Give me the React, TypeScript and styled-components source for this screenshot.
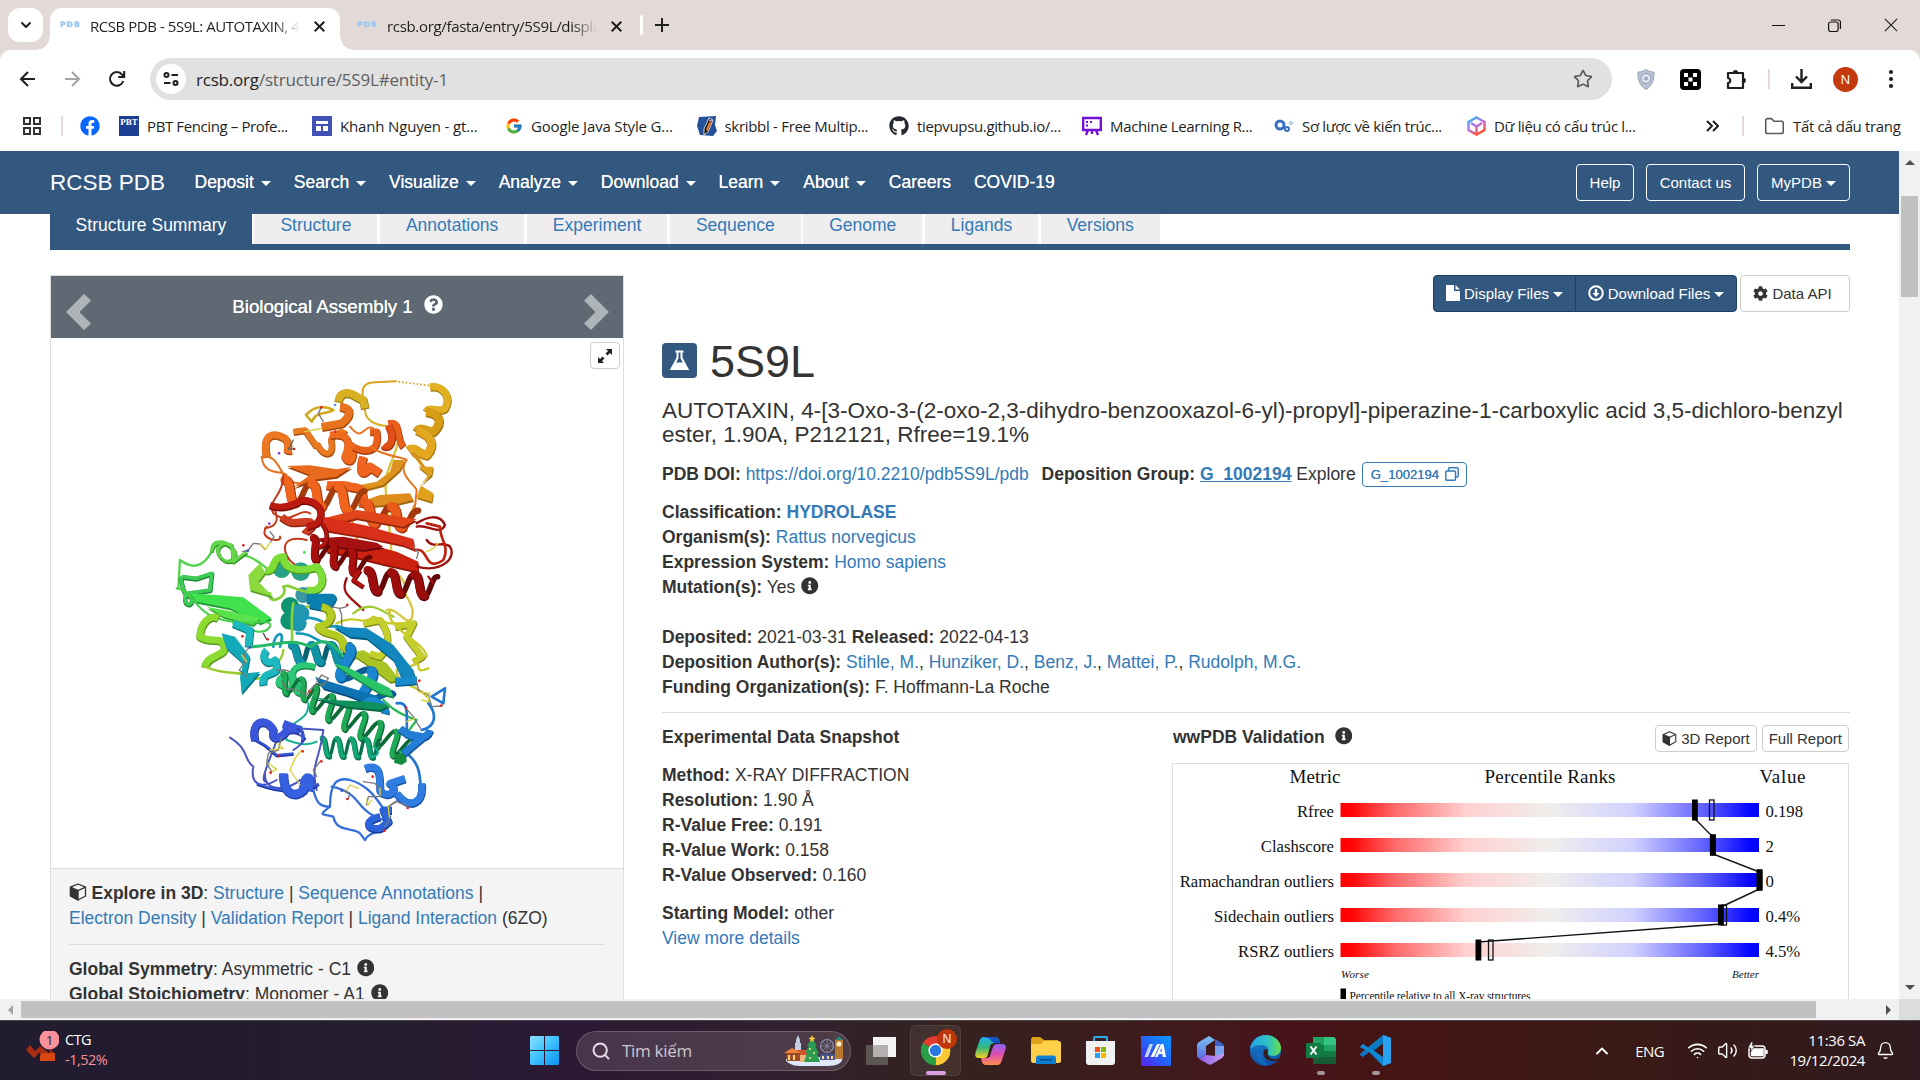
import React from 'react';
import styled, { createGlobalStyle, css } from 'styled-components';
import { FaFacebook, FaGithub, FaInfoCircle, FaQuestionCircle, FaCog } from 'react-icons/fa';
import { FcGoogle } from 'react-icons/fc';
import { Bell, Search, Wifi, Volume2, Star, ChevronUp, ChevronDown, Folder } from 'lucide-react';

const blue = '#325880';
const link = '#337ab7';
const ui = '"Open Sans", "Noto Sans", sans-serif';
const arial = '"Liberation Sans", Arial, sans-serif';

const Global = createGlobalStyle`
  * { box-sizing: border-box; }
  body { margin: 0; background: #fff; overflow: hidden; }
  svg { display: block; flex: none; }
`;

const Screen = styled.div`
  width: 1920px;
  height: 1080px;
  display: flex;
  flex-direction: column;
  overflow: hidden;
  font-family: ${arial};
  color: #333;
`;

/* ---------- browser chrome ---------- */

const TabStrip = styled.div`
  height: 50px;
  flex: none;
  background: #e3dad7;
  display: flex;
  align-items: flex-end;
  padding-left: 8px;
  font: 15px ${ui};
  color: #1f1f1f;
`;
const TabMenu = styled.div`
  width: 35px;
  height: 34px;
  margin-bottom: 8px;
  border-radius: 12px;
  background: #fff;
  display: flex;
  align-items: center;
  justify-content: center;
`;
const Tab = styled.div<{ $active?: boolean; $w: number }>`
  width: ${p => p.$w}px;
  height: 42px;
  margin-left: 7px;
  padding: 0 15px 6px 10px;
  display: flex;
  align-items: center;
  position: relative;
  ${p => p.$active && css`
    background: #fff;
    border-radius: 12px 12px 0 0;
    &::before, &::after {
      content: '';
      position: absolute;
      bottom: 0;
      width: 14px;
      height: 14px;
    }
    &::before { left: -14px; background: radial-gradient(circle at 0 0, transparent 13.5px, #fff 14px); }
    &::after { right: -14px; background: radial-gradient(circle at 100% 0, transparent 13.5px, #fff 14px); }
  `}
`;
const Favicon = styled.span`
  width: 20px;
  flex: none;
  margin-top: -3px;
  font: 700 7.5px "DejaVu Sans", sans-serif;
  color: #9cc8f2;
  letter-spacing: 1.1px;
  text-shadow: 0 0 0.8px #9cc8f2;
`;
const TabTitle = styled.span<{ $ls: number }>`
  flex: 1;
  margin: 0 14px 0 10px;
  overflow: hidden;
  white-space: nowrap;
  letter-spacing: ${p => p.$ls}px;
  mask-image: linear-gradient(90deg, #000 88%, transparent);
`;
const StripDivider = styled.div`
  width: 3px;
  height: 20px;
  margin: 0 12px 15px 3px;
  border-radius: 2px;
  background: #fff;
`;
const PlusBox = styled.div`
  padding-bottom: 18px;
`;
const WindowButtons = styled.div`
  flex: 1;
  height: 50px;
  display: flex;
  justify-content: flex-end;
  align-items: center;
  gap: 43px;
  padding-right: 22px;
`;

const Toolbar = styled.div`
  height: 58px;
  flex: none;
  background: #e3dad7;
`;
const ToolbarFace = styled.div`
  height: 58px;
  padding: 0 0 0 19px;
  background: #fff;
  border-radius: 11px 11px 0 0;
  display: flex;
  align-items: center;
`;
const NavIcons = styled.div`
  display: flex;
  gap: 26.5px;
  width: 131px;
`;
const AddressBar = styled.div`
  width: 1462px;
  height: 42px;
  border-radius: 21px;
  background: #e1e1e1;
  display: flex;
  align-items: center;
  padding: 0 19px 0 6px;
  font: 17px ${ui};
  letter-spacing: -0.2px;
  color: #5f5f5f;
  b { font-weight: 400; color: #1f1f1f; }
`;
const SiteInfo = styled.div`
  width: 30px;
  height: 30px;
  border-radius: 50%;
  background: #fff;
  margin-right: 10px;
  display: flex;
  align-items: center;
  justify-content: center;
`;
const Grow = styled.div`
  flex: 1;
`;
const Extensions = styled.div`
  display: flex;
  align-items: center;
  gap: 25px;
  padding-left: 25px;
`;
const ToolbarRight = styled.div`
  display: flex;
  align-items: center;
  gap: 21px;
  padding-left: 21px;
`;
const VRule = styled.div<{ $m?: string }>`
  width: 2px;
  height: 20px;
  background: #e3dad7;
  margin: ${p => p.$m || '0'};
`;
const Avatar = styled.div`
  width: 25px;
  height: 25px;
  border-radius: 50%;
  background: #c5390f;
  color: #fff;
  font: 13px/25px ${ui};
  text-align: center;
`;
const Bookmarks = styled.div`
  height: 43px;
  flex: none;
  display: flex;
  align-items: center;
  padding: 0 18px 7px 23px;
  background: #fff;
  font: 15px/20px ${ui};
  color: #1f1f1f;
`;
const Bookmark = styled.div<{ $w: number; $ls: number }>`
  width: ${p => p.$w}px;
  display: flex;
  align-items: center;
  gap: 8px;
  white-space: nowrap;
  letter-spacing: ${p => p.$ls}px;
`;
const BlueTile = styled.span`
  width: 20px;
  height: 20px;
  background: #1c3f94;
  color: #fff;
  font: 700 9px/12px "Liberation Serif", serif;
  text-align: center;
  letter-spacing: 0;
`;

/* ---------- page ---------- */

const Middle = styled.div`
  height: 848px;
  flex: none;
  display: flex;
`;
const Page = styled.div`
  width: 1899px;
  height: 848px;
  overflow: hidden;
  background: #fff;
  font-size: 17.5px;
  line-height: 25px;
`;
const SiteNav = styled.div`
  height: 63px;
  background: ${blue};
  color: #fff;
  display: flex;
  align-items: center;
  padding: 0 49px 0 50px;
`;
const Brand = styled.div`
  width: 144.5px;
  font-size: 22.5px;
  white-space: nowrap;
  padding-bottom: 1px;
`;
const NavItem = styled.div`
  display: flex;
  align-items: center;
  margin-right: 22.9px;
  text-shadow: 0 0 0.4px #fff;
`;
const Caret = styled.i`
  display: inline-block;
  margin-left: 7px;
  margin-top: 2px;
  border: 5px solid transparent;
  border-top-color: currentColor;
  border-bottom: 0;
`;
const OutlineButton = styled.div<{ $w: number }>`
  width: ${p => p.$w}px;
  height: 37px;
  margin-left: 12px;
  padding-bottom: 1px;
  border: 1.25px solid #fff;
  border-radius: 4px;
  font-size: 15px;
  display: flex;
  align-items: center;
  justify-content: center;
  ${Caret} { margin-left: 4px; }
`;
const PageTabs = styled.div`
  margin: 0 49px 0 50px;
  height: 36px;
  border-bottom: 6px solid ${blue};
  display: flex;
  gap: 2.5px;
`;
const PageTab = styled.div<{ $active?: boolean }>`
  padding: 0 ${p => (p.$active ? 25.6 : 26)}px;
  line-height: 22px;
  background: ${p => (p.$active ? blue : '#efeded')};
  color: ${p => (p.$active ? '#fff' : link)};
`;
const Columns = styled.div`
  display: grid;
  grid-template-columns: 574px 1188px;
  column-gap: 38px;
  padding: 25px 0 0 50px;
`;
const Panel = styled.div`
  border: 1px solid #ddd;
  height: 740px;
`;
const PanelHead = styled.div`
  height: 62px;
  background: #5f6973;
  color: #fff;
  display: flex;
  align-items: center;
  justify-content: space-between;
  padding: 9px 14px 0 15px;
`;
const PanelTitle = styled.div`
  display: flex;
  align-items: center;
  gap: 11px;
  padding-bottom: 11px;
  font-size: 18.75px;
  letter-spacing: -0.05px;
  text-shadow: 0 0 0.6px #fff;
  svg { margin-bottom: 3px; }
`;
const Viewer = styled.div`
  height: 530px;
  padding: 22px 0 0 99px;
  position: relative;
`;
const ExpandButton = styled.div`
  position: absolute;
  top: 4px;
  right: 3px;
  width: 30px;
  height: 27px;
  border: 1px solid #ccc;
  border-radius: 4px;
  display: flex;
  align-items: center;
  justify-content: center;
  background: #fff;
`;
const PanelFoot = styled.div`
  border-top: 1px solid #ddd;
  background: #f4f4f4;
  padding: 12px 18px 0 18px;
  height: 146px;
`;
const Line = styled.div`
  height: 25px;
  white-space: pre;
`;
const A = styled.a<{ $b?: boolean; $u?: boolean }>`
  color: ${link};
  font-weight: ${p => (p.$b ? 700 : 400)};
  text-decoration: ${p => (p.$u ? 'underline' : 'none')};
`;
const Rule = styled.hr`
  border: 0;
  border-top: 1px solid #ddd;
  margin: 12.5px 0 12.3px;
`;
const IconSlot = styled.span<{ $m?: string }>`
  display: inline-flex;
  vertical-align: -2px;
  margin: ${p => p.$m || '0'};
`;
const Actions = styled.div`
  display: flex;
  justify-content: flex-end;
  font-size: 15px;
`;
const Action = styled.div<{ $w: number; $light?: boolean; $first?: boolean }>`
  width: ${p => p.$w}px;
  height: 37px;
  border: 1px solid ${p => (p.$light ? '#ccc' : '#1d3f62')};
  background: ${p => (p.$light ? '#fff' : blue)};
  color: ${p => (p.$light ? '#333' : '#fff')};
  border-radius: ${p => (p.$light ? '4px' : p.$first ? '4px 0 0 4px' : '0 4px 4px 0')};
  margin-left: ${p => (p.$light ? 3 : p.$first ? 0 : -1)}px;
  padding-bottom: 1px;
  display: flex;
  align-items: center;
  justify-content: center;
  gap: 4px;
  ${p => p.$light && css`padding-right: 5px;`}
  ${Caret} { margin-left: 0; }
`;
const Heading = styled.div`
  display: flex;
  align-items: center;
  gap: 13px;
  height: 50px;
  margin-top: 24.500px;
  font-size: 45px;
  line-height: 49.5px;
`;
const FlaskTile = styled.div`
  width: 35px;
  height: 35px;
  margin-bottom: 3px;
  border-radius: 4px;
  background: ${blue};
  display: flex;
  align-items: center;
  justify-content: center;
`;
const Title = styled.div`
  margin-top: 12px;
  height: 63.5px;
  font-size: 22.5px;
  line-height: 24.75px;
`;
const Block = styled.div<{ $h: number }>`
  height: ${p => p.$h}px;
`;
const GroupButton = styled.span`
  height: 25px;
  margin-left: 6px;
  padding: 0 7px 0 8px;
  border: 1px solid ${link};
  border-radius: 4px;
  color: ${link};
  font-size: 13.1px;
  text-shadow: 0 0 0.6px ${link};
  display: inline-flex;
  align-items: center;
  gap: 6px;
  vertical-align: middle;
  margin-top: -2px;
`;
const Split = styled.div`
  display: grid;
  grid-template-columns: 510px 677px;
`;
const ValidationHead = styled.div`
  display: flex;
  height: 38px;
  font-weight: 700;
`;
const ValidationTitle = styled.span`
  padding-left: 1px;
`;
const SmallButton = styled.div`
  height: 27px;
  margin-left: 5px;
  padding: 0 6px;
  border: 1px solid #ccc;
  border-radius: 4px;
  font-size: 15px;
  font-weight: 400;
  display: flex;
  align-items: center;
  gap: 4px;
`;
const ChartBox = styled.div`
  border: 1px solid #ddd;
  height: 250px;
`;
const VScroll = styled.div`
  width: 21px;
  background: #f1f1f1;
  display: flex;
  flex-direction: column;
  align-items: center;
  justify-content: space-between;
  padding: 9px 0 9px;
`;
const VThumb = styled.div`
  width: 17px;
  height: 101px;
  margin-top: 31px;
  margin-bottom: auto;
  background: #c1c1c1;
`;
const HScroll = styled.div`
  height: 21px;
  flex: none;
  background: linear-gradient(90deg, #f1f1f1 1899px, #dcdcdc 1899px);
  display: flex;
  align-items: center;
  padding-left: 8px;
`;
const HThumb = styled.div`
  width: 1795px;
  height: 17px;
  margin: 0 70px 0 8px;
  background: #c1c1c1;
`;
const Arrow = styled.i<{ $d: 'u' | 'd' | 'l' | 'r' }>`
  width: 0;
  height: 0;
  border: 5px solid transparent;
  ${p => p.$d === 'u' && css`border-bottom-color: #505050; border-top: 0;`}
  ${p => p.$d === 'd' && css`border-top-color: #505050; border-bottom: 0;`}
  ${p => p.$d === 'l' && css`border-right-color: #a3a3a3; border-left: 0;`}
  ${p => p.$d === 'r' && css`border-left-color: #505050; border-right: 0;`}
`;

/* ---------- taskbar ---------- */

const Taskbar = styled.div`
  height: 60px;
  flex: none;
  display: flex;
  align-items: center;
  border-top: 1px solid #4a444c;
  padding: 0 25px 0 26px;
  background: linear-gradient(90deg, #221c30 0, #241c31 400px, #2d1833 590px, #33202e 800px, #35221f 950px, #3d1c1e 1130px, #47141a 1290px, #431613 1440px, #381a17 1650px, #2f1b1f 1920px);
  color: #fff;
  font: 15px/20px ${ui};
`;
const Stock = styled.div`
  width: 504px;
  display: flex;
  gap: 6px;
`;
const StockText = styled.div`
  letter-spacing: -0.5px;
  line-height: 20px;
  margin-top: -1px;
  font-size: 14.5px;
  span { display: block; color: #f98f9b; }
`;
const SearchPill = styled.div`
  width: 275px;
  height: 40px;
  margin: 0 2px 0 17px;
  border: 1px solid rgba(255, 255, 255, 0.18);
  border-radius: 20px;
  background: rgba(255, 255, 255, 0.13);
  display: flex;
  align-items: center;
  padding: 0 6px 0 14px;
  font-size: 17px;
  letter-spacing: -0.3px;
  color: #cfc6cf;
`;
const Cell = styled.div<{ $active?: boolean }>`
  width: 51px;
  height: 51px;
  margin: 0 2px;
  border-radius: 6px;
  display: flex;
  align-items: center;
  justify-content: center;
  position: relative;
  ${p => p.$active && css`
    background: rgba(255, 255, 255, 0.07);
    border: 1px solid rgba(255, 255, 255, 0.08);
  `}
`;
const RunMark = styled.i<{ $on?: boolean }>`
  position: absolute;
  bottom: ${p => (p.$on ? 0 : 1)}px;
  width: ${p => (p.$on ? 20 : 8)}px;
  height: 4px;
  border-radius: 2px;
  background: ${p => (p.$on ? '#d9a0e4' : '#a39698')};
`;
const CellBadge = styled.span`
  position: absolute;
  left: 26px;
  top: 3px;
  width: 20px;
  height: 20px;
  border-radius: 50%;
  background: #bf360c;
  color: #f0d5cc;
  font: 600 12px/20px ${ui};
  text-align: center;
`;
const Tray = styled.div`
  flex: 1;
  display: flex;
  align-items: center;
  justify-content: flex-end;
`;
const Lang = styled.span`
  margin: 0 23px 0 23px;
  font-size: 15px;
  letter-spacing: -0.6px;
`;
const Clock = styled.div`
  width: 96px;
  text-align: right;
  letter-spacing: -0.4px;
  margin-right: 11px;
  padding-bottom: 1px;
`;

/* ---------- drawings ---------- */

const CubeIcon = ({ s = 18 }: { s?: number }) => (
  <svg width={s} height={s} viewBox="0 0 18 18" fill="none" stroke="#333" strokeWidth="1.3" strokeLinejoin="round">
    <path d="M9 1 16.5 4.2V13L9 17 1.500 13V4.200Z" />
    <path d="M1.500 4.200 9 7.600V17L1.500 13Z" fill="#333" />
    <path d="M9 7.600 16.500 4.200" />
  </svg>
);

const Chevron = ({ flip }: { flip?: boolean }) => (
  <svg width="25" height="36" viewBox="0 0 25 36" fill="#afb4b9">
    <path d={flip ? 'M7 0 25 18 7 36 0 29.500 11.500 18 0 6.500Z' : 'M18 0 25 6.500 13.500 18 25 29.500 18 36 0 18Z'} />
  </svg>
);

type P = [number, number];

function helixPaths(a: P, b: P, amp: number, turns: number) {
  const dx = b[0] - a[0];
  const dy = b[1] - a[1];
  const len = Math.hypot(dx, dy);
  const ux = dx / len;
  const uy = dy / len;
  const at = (t: number, side: number): P => [
    a[0] + dx * t - uy * amp * side,
    a[1] + dy * t + ux * amp * side,
  ];
  const front: string[] = [];
  const back: string[] = [];
  for (let i = 0; i < turns * 2; i++) {
    const side = i % 2 ? 1 : -1;
    const p = at(i / (turns * 2), side);
    const q = at((i + 1) / (turns * 2), -side);
    const k = (len / turns) * 0.28;
    const d = `M${p[0]} ${p[1]}C${p[0] + ux * k} ${p[1] + uy * k} ${q[0] - ux * k} ${q[1] - uy * k} ${q[0]} ${q[1]}`;
    (i % 2 ? back : front).push(d);
  }
  return { front: front.join(''), back: back.join('') };
}

const Helix = ({ a, b, amp, turns, c, d, w = 26 }: { a: P; b: P; amp: number; turns: number; c: string; d: string; w?: number }) => {
  const h = helixPaths(a, b, amp, turns);
  return (
    <g fill="none" strokeLinecap="round">
      <path d={h.back} stroke={d} strokeWidth={w * 0.6} />
      <path d={h.front} stroke={d} strokeWidth={w} transform="translate(2 3)" />
      <path d={h.front} stroke={c} strokeWidth={w - 4} />
    </g>
  );
};

const Ribbon = ({ p, c, d, w = 20 }: { p: string; c: string; d: string; w?: number }) => (
  <g fill="none" strokeLinejoin="round">
    <path d={p} stroke={d} strokeWidth={w} transform="translate(1 3)" />
    <path d={p} stroke={c} strokeWidth={w - 3} />
  </g>
);

const Coil = ({ p, c, w = 6 }: { p: string; c: string; w?: number }) => (
  <path d={p} fill="none" stroke={c} strokeWidth={w} strokeLinecap="round" strokeLinejoin="round" />
);

const Sheet = ({ p, c, d }: { p: string; c: string; d: string }) => (
  <g>
    <path d={p} fill={d} transform="translate(2 6)" />
    <path d={p} fill={c} />
  </g>
);

const sticks: [string, string][] = [
  ['M278 575 295 570 310 550 330 552 345 568', '#777'], ['M330 552 347 568 362 545', '#d9cf3a'],
  ['M362 545 372 530 360 515', '#777'], ['M430 240 415 268 432 265', '#666'],
  ['M465 215 490 210 515 205', '#d9cf3a'], ['M515 140 505 160 520 185', '#777'],
  ['M790 560 805 578 800 595', '#777'], ['M830 575 850 565 865 550', '#d9cf3a'],
  ['M540 740 570 745 590 740 592 732', '#777'], ['M568 745 575 765 575 800', '#777'],
  ['M300 860 282 880 285 905 268 930 290 950', '#777'], ['M275 885 290 905', '#d9cf3a'],
  ['M340 820 350 838', '#555'], ['M380 930 405 930 420 935', '#777'],
  ['M395 965 410 985 440 990 470 1005 480 990 500 970 520 975 535 955 515 945 500 965', '#777'],
  ['M800 965 805 990 835 1005 845 1040 875 1038', '#777'], ['M805 995 840 1000 835 1025 815 1020', '#d9cf3a'],
  ['M768 1045 790 1070 805 1095 812 1105', '#777'], ['M770 1085 795 1075', '#d9cf3a'],
  ['M395 1130 385 1170 355 1180 350 1210 365 1235', '#777'], ['M360 1170 400 1165 380 1150', '#d9cf3a'],
  ['M355 1210 380 1228 360 1238', '#d9cf3a'], ['M455 1170 435 1195 420 1230 440 1260 450 1275', '#d9cf3a'],
  ['M510 1205 490 1230 500 1250', '#777'], ['M580 1290 600 1300 595 1315', '#777'],
  ['M590 1290 600 1275 625 1285', '#d9cf3a'], ['M640 1265 675 1270 690 1290 690 1310 655 1310 650 1335', '#777'],
  ['M690 1285 690 1305', '#d9cf3a'], ['M650 1320 655 1335 665 1320', '#d9cf3a'],
  ['M735 1325 715 1340 720 1375 705 1400', '#777'], ['M775 1340 740 1325 715 1340', '#777'],
  ['M715 1340 718 1372', '#d9cf3a'],
];
const atoms: [number, number, string][] = [
  [387, 280, '#8a3fd6'], [358, 491, '#8a3fd6'], [463, 577, '#3fd83f'], [280, 556, '#d22'], [555, 215, '#d22'],
  [432, 267, '#d22'], [353, 838, '#d22'], [592, 735, '#d22'], [808, 962, '#d22'], [874, 1037, '#d22'], [768, 1043, '#d22'],
  [385, 1186, '#d22'], [362, 1238, '#d22'], [458, 1174, '#d22'], [514, 1204, '#d22'], [592, 1317, '#d22'],
  [704, 1412, '#d22'], [773, 1344, '#d22'], [668, 1250, '#d22'], [293, 573, '#35c'], [300, 862, '#35c'],
  [575, 1292, '#35c'], [742, 1320, '#35c'], [555, 135, '#5b9bd5'], [514, 142, '#d22'], [478, 995, '#d22'], [277, 829, '#d22'],
];

const Protein = () => (
  <svg width="330" height="500" viewBox="0 0 990 1500">
    {/* gold and yellow domain */}
    <Coil c="#dba21c" p="M640 120C630 75 650 68 675 67L738 64" />
    <path d="M745 65 840 77" stroke="#dba21c" strokeWidth="5" strokeDasharray="5 6" />
    <Coil c="#d9ae22" p="M645 140C640 185 680 195 712 198" />
    <Coil c="#d9c640" w={7} p="M745 240C735 300 700 330 708 400L715 470C720 540 730 580 720 625C740 640 760 650 765 680C750 700 800 730 785 775C770 800 740 740 710 750" />
    <Ribbon c="#e2b023" d="#a37a10" w={24} p="M840 80C880 75 905 110 885 145C870 160 840 135 828 155" />
    <Ribbon c="#d69c16" d="#9c6f0a" w={28} p="M828 155C870 160 880 185 850 215C830 215 810 195 800 215" />
    <Ribbon c="#e2a71f" d="#a37212" w={28} p="M800 210C840 225 860 250 830 285C810 285 795 255 775 270" />
    <Coil c="#d69318" w={10} p="M790 285C815 300 805 310 830 330" />
    <Sheet c="#e0a11e" d="#a8730f" p="M805 320 850 320 845 345 810 375 850 400 845 425 800 412 815 370 835 345Z" />
    <Ribbon c="#d8b024" d="#9b7a12" w={26} p="M565 125C570 90 600 95 620 110L640 120 645 145" />
    <Coil c="#d2ab22" w={8} p="M468 165C490 140 520 135 550 150C530 165 500 150 485 185Z" />
    <Coil c="#dfa12a" w={6} p="M600 455C610 500 620 520 625 560M780 460C800 440 800 410 780 470" />
    <Sheet c="#dd931d" d="#a66910" p="M730 300 765 300 750 330 700 375 620 395 580 385 680 365 720 335Z" />
    <Sheet c="#de8d1c" d="#a5660f" p="M620 430 690 405 780 400 790 420 740 432 640 440Z" />
    {/* orange domain */}
    <Ribbon c="#ee7722" d="#a84c0e" w={24} p="M350 290C335 220 370 215 405 235C430 260 395 275 425 270" />
    <Ribbon c="#e97a20" d="#a84f10" w={20} p="M430 215 465 210 500 260M500 250C520 290 550 290 545 250C535 215 580 220 585 210" />
    <Ribbon c="#e8731e" d="#9f4708" w={26} p="M515 200 575 190C600 170 610 145 570 140" />
    <Ribbon c="#ef6a1d" d="#a34410" w={24} p="M540 225C580 220 610 230 585 290C600 320 620 290 600 250" />
    <Ribbon c="#e9601a" d="#a03c0c" w={22} p="M610 260C650 280 690 275 680 215L660 215M715 190C755 180 735 230 760 260" />
    <Ribbon c="#df4e17" d="#9a330a" w={24} p="M715 195C740 240 715 270 700 255" />
    <Coil c="#e87422" p="M335 290C340 350 400 330 410 345M335 290C400 280 380 370 450 370M600 200C640 250 640 190 670 205M660 260C700 290 760 290 770 300C740 340 790 370 800 390L795 440" />
    <Sheet c="#e86a1c" d="#9c430d" p="M410 318 480 316 560 328 605 320 560 350 500 358 430 382 480 345Z" />
    <Ribbon c="#ee6420" d="#a83d0e" w={28} p="M640 290C625 340 640 350 660 320L690 340M530 375C560 380 580 370 600 380C640 380 640 395 640 440" />
    <Helix a={[400, 390]} b={[640, 425]} amp={32} turns={3} c="#f0641e" d="#a53c0d" w={30} />
    <Helix a={[640, 455]} b={[800, 480]} amp={28} turns={2} c="#ec5a1c" d="#a5360d" w={32} />
    <Sheet c="#e0461a" d="#982a0c" p="M510 478 620 450 800 478 760 500 620 475 520 500Z" />
    {/* red domain */}
    <Coil c="#c23a18" p="M400 345C400 410 350 420 370 460C420 500 450 440 480 460M350 500C320 540 400 550 390 530M370 440C390 480 380 500 345 505M470 540C380 520 400 590 430 610L465 640" />
    <Ribbon c="#cf3d22" d="#8a2010" w={24} p="M395 470C430 500 440 480 480 485C500 500 470 510 465 520" />
    <Ribbon c="#b81a10" d="#7b0b0a" w={22} p="M360 435C400 450 440 430 455 420C500 420 530 450 500 490L470 500" />
    <Sheet c="#d8301a" d="#9d1c0c" p="M520 470 650 497 790 537 795 570 760 556 640 530 520 510Z" />
    <Sheet c="#cc2210" d="#8b100a" p="M530 545 610 540 740 575 805 605 805 635 700 612 590 585 530 575Z" />
    <Sheet c="#a51010" d="#700708" p="M500 535 580 530 680 548 700 560 640 570 560 560Z" />
    <Helix a={[480, 560]} b={[650, 620]} amp={30} turns={3} c="#a80f0d" d="#6b0707" w={24} />
    <Helix a={[650, 660]} b={[860, 680]} amp={30} turns={3} c="#9c0d0e" d="#620708" w={28} />
    <Ribbon c="#b01510" d="#740a08" w={14} p="M515 490C540 520 530 560 505 560M630 630 610 660 640 680" />
    <Coil c="#9c1110" w={7} p="M590 655C570 700 600 710 640 750M800 620C880 640 920 590 900 560C880 540 850 570 830 540M800 490C830 470 870 460 885 495C870 530 830 490 800 500M835 650 850 670" />
    <Coil c="#c0210f" w={8} p="M795 570C840 560 820 640 880 600C900 560 870 540 870 500L830 490" />
    {/* green domain */}
    <g fill="#2aa287"><circle cx="395" cy="628" r="26" /><circle cx="452" cy="635" r="28" /></g>
    <g fill="#0d9470"><circle cx="420" cy="738" r="27" /><circle cx="418" cy="782" r="27" /></g>
    <g fill="#2296ae"><circle cx="450" cy="760" r="28" /><circle cx="445" cy="790" r="25" /></g>
    <circle cx="460" cy="705" r="24" fill="#3d97a3" />
    <Coil c="#55d24d" w={7} p="M85 685 90 600C130 630 160 620 185 575C180 540 220 535 245 560C265 590 240 610 220 600C180 570 210 530 250 575M260 600C280 570 320 600 350 625" />
    <Ribbon c="#66d84a" d="#37962c" w={11} p="M185 575C190 535 240 545 255 575C265 605 225 620 205 580C200 555 225 545 245 555L250 605 290 575" />
    <Ribbon c="#7fdd38" d="#4c9b20" w={24} p="M345 630C380 640 360 590 400 590C400 640 480 630 500 620C530 650 520 700 470 690" />
    <Coil c="#86cf38" w={8} p="M470 695C430 690 420 670 400 680C420 710 350 740 360 700M430 730C420 780 430 820 425 850" />
    <Sheet c="#8bdb3e" d="#56a022" p="M295 645 330 610 345 640 325 665 370 710 300 690Z" />
    <Ribbon c="#3ecb57" d="#218a38" w={14} p="M95 650 140 655 185 640 180 690 110 700C90 730 130 750 125 710C90 700 100 670 90 650" />
    <Sheet c="#3fe24c" d="#23983a" p="M120 700 200 705 280 712 365 775 330 790 240 745 140 725Z" />
    <Sheet c="#5ae34c" d="#34a130" p="M170 740 250 755 330 775 310 795 220 770Z" />
    <Coil c="#45cf4b" w={6} p="M80 685C130 690 130 760 220 780C290 800 370 770 360 800C340 830 300 810 250 790" />
    <Ribbon c="#8cdb31" d="#5a981d" w={24} p="M205 775C180 760 150 790 150 830C180 850 210 830 220 850C240 890 170 880 165 920" />
    <Coil c="#9acb30" w={7} p="M165 920C230 950 280 930 290 950C340 980 400 900 400 870M470 740C520 730 540 760 530 790M610 760C660 720 690 750 730 770" />
    {/* teal and cyan core */}
    <Sheet c="#12a9b8" d="#0b7480" p="M215 820 255 830 300 890 290 940 330 935 275 1000 270 950 280 910 230 865Z" />
    <Ribbon c="#1db8c0" d="#0d7a82" w={24} p="M250 790 300 810 295 860M350 870C330 890 350 920 375 900C400 960 330 920 340 975" />
    <Ribbon c="#0a7fb0" d="#06597e" w={30} p="M470 715 545 715 530 740 480 730" />
    <Coil c="#1798bb" w={8} p="M440 800C450 760 500 770 540 800C570 790 600 820 640 820M370 860C370 820 410 800 390 860M440 820C500 820 490 850 550 850" />
    <Helix a={[425, 880]} b={[600, 880]} amp={26} turns={3} c="#0f93a6" d="#086273" w={26} />
    <Coil c="#27b86a" w={9} p="M300 860C370 860 420 830 480 860C540 820 560 870 590 900" />
    {/* lime strands */}
    <Ribbon c="#b4cb22" d="#798a10" w={24} p="M515 740C560 750 550 790 505 800C520 830 580 810 580 860L620 890" />
    <Sheet c="#a8c525" d="#728a10" p="M600 880 640 870 710 910 750 960 720 965 640 905Z" />
    <Ribbon c="#c4cf2b" d="#868d17" w={22} p="M640 790 690 780C720 820 720 860 690 890L660 880M735 800 790 790 770 830 815 890 790 905" />
    <Coil c="#c9c92b" w={7} p="M560 790C620 760 640 800 670 770C720 790 690 790 760 790M720 750C700 800 830 850 830 890M780 920C830 890 780 950 835 925M740 930C740 980 800 970 830 1010" />
    <Sheet c="#1187bd" d="#075a82" p="M550 800 650 805 730 855 790 930 800 970 760 965 730 900 650 835 600 830Z" />
    <Helix a={[570, 890]} b={[700, 1030]} amp={40} turns={2} c="#1a86d0" d="#0d5c98" w={32} />
    <Sheet c="#0f73b3" d="#084d7e" p="M495 950 540 965 640 995 690 1010 670 1035 590 1005 520 985Z" />
    <Ribbon c="#1a8bce" d="#0b5b91" w={26} p="M640 1040C660 1000 710 1040 705 1060M735 965 800 960" />
    <Sheet c="#29c568" d="#158745" p="M550 910 590 920 720 985 730 1010 690 1000 600 945Z" />
    {/* lower green helices */}
    <Ribbon c="#2bc876" d="#14834a" w={20} p="M495 920C440 905 420 930 430 955C400 930 370 970 395 975C440 1010 430 940 410 945M430 955C440 1030 470 990 445 960" />
    <Helix a={[390, 965]} b={[500, 1000]} amp={28} turns={2} c="#20ab59" d="#10713a" w={18} />
    <Helix a={[480, 1010]} b={[770, 1170]} amp={34} turns={6} c="#20a957" d="#0d6b38" w={19} />
    <Sheet c="#10905c" d="#086543" p="M480 1010 550 1020 660 1025 720 1035 690 1050 590 1040Z" />
    <Helix a={[515, 1160]} b={[690, 1165]} amp={27} turns={4} c="#12a775" d="#08704d" w={17} />
    <Coil c="#16b095" p="M475 1030C480 1090 400 1080 410 1140C440 1150 470 1160 500 1145M660 1190C690 1190 690 1170 670 1160M420 1095 455 1100" />
    <Coil c="#28b957" w={7} p="M700 1020C720 1040 740 1060 800 1080L770 1120C810 1160 780 1200 750 1175" />
    <path d="M735 1185 768 1175 770 1205 755 1215 732 1208Z" fill="#168b3e" />
    {/* blue tails */}
    <Coil c="#1f77d0" w={8} p="M740 1030C790 1020 760 1100 775 1130M885 985 880 1030 845 1010 885 985M835 1030C860 1060 860 1100 815 1110M770 1180C820 1220 805 1260 815 1290" />
    <Ribbon c="#247dd6" d="#12539c" w={24} p="M750 1105C790 1140 830 1140 840 1110M765 1120 820 1130 760 1180" />
    <Coil c="#4a55c4" w={6} p="M240 1133C300 1170 280 1200 310 1220C300 1270 330 1290 380 1260M345 1240C340 1300 420 1290 450 1260M380 1140C360 1200 330 1260 345 1265M520 1110C510 1200 480 1210 500 1290M440 1105 520 1110M430 1120C480 1130 460 1150 430 1170" />
    <Ribbon c="#3a56da" d="#2538a0" w={25} p="M315 1140C300 1080 350 1070 370 1110C360 1150 400 1130 410 1110L440 1105M400 1090 450 1110" />
    <Ribbon c="#3959dd" d="#2238a2" w={9} p="M310 1135 345 1155 380 1185 430 1180M320 1270C400 1300 480 1300 505 1270M465 1130C440 1160 480 1120 440 1100" />
    <Ribbon c="#3560df" d="#1e3ca6" w={28} p="M400 1240C400 1310 440 1310 460 1290C460 1240 490 1240 475 1290" />
    <Coil c="#356fd8" w={7} p="M490 1290C500 1330 510 1340 540 1340C540 1270 560 1250 600 1260C670 1280 690 1340 720 1370M545 1280C640 1300 610 1350 700 1380M540 1340C500 1370 520 1360 550 1370C560 1420 610 1400 630 1420L645 1440C660 1410 700 1420 715 1400" />
    <Ribbon c="#2f7de0" d="#1c52a5" w={24} p="M645 1225C690 1210 690 1240 690 1290C710 1320 750 1290 720 1270L765 1255M740 1300C780 1350 820 1330 815 1270" />
    <Ribbon c="#2d63d8" d="#173a99" w={24} p="M690 1370C640 1380 650 1410 690 1405L715 1385 700 1350 725 1350" />
    {sticks.map(([d, c], i) => <Coil key={i} p={d} c={c} w={4} />)}
    {atoms.map(([x, y, c], i) => <circle key={i} cx={x} cy={y} r="4" fill={c} />)}
  </svg>
);

const metrics = [
  { label: 'Rfree', value: '0.198', solid: 522, hollow: 538.5 },
  { label: 'Clashscore', value: '2', solid: 540, hollow: 539.5 },
  { label: 'Ramachandran outliers', value: '0', solid: 586.5, hollow: 586.5 },
  { label: 'Sidechain outliers', value: '0.4%', solid: 548, hollow: 551 },
  { label: 'RSRZ outliers', value: '4.5%', solid: 305.5, hollow: 317.5 },
];

const ValidationChart = () => (
  <svg width="675" height="237" fontFamily='"Liberation Serif", "Times New Roman", serif' fill="#111">
    <defs>
      <linearGradient id="rank">
        <stop offset="0" stopColor="#f00" />
        <stop offset="0.03" stopColor="#ff0808" />
        <stop offset="0.13" stopColor="#ff6a6a" />
        <stop offset="0.3" stopColor="#ffd0d0" />
        <stop offset="0.5" stopColor="#efeeec" />
        <stop offset="0.7" stopColor="#d0d0ff" />
        <stop offset="0.87" stopColor="#6060ff" />
        <stop offset="0.98" stopColor="#0404ff" />
        <stop offset="1" stopColor="#00f" />
      </linearGradient>
    </defs>
    <g fontSize="19">
      <text x="116.500" y="19" textLength="51">Metric</text>
      <text x="311.500" y="19" textLength="131">Percentile Ranks</text>
      <text x="586.500" y="19" textLength="46">Value</text>
    </g>
    {metrics.map((m, i) => (
      <g key={m.label} transform={`translate(0 ${i * 35})`}>
        <text x="161" y="53" textAnchor="end" fontSize="16.700">{m.label}</text>
        <rect x="167.500" y="39" width="418.500" height="14" fill="url(#rank)" />
        <text x="592.500" y="53" fontSize="16.700">{m.value}</text>
      </g>
    ))}
    <polyline
      fill="none" stroke="#111" strokeWidth="1.400"
      points={metrics.map((m, i) => `${m.solid},${i ? 38 + i * 35 : 56} ${m.solid},${i < 4 ? 55 + i * 35 : 38 + i * 35}`).join(' ')}
    />
    {metrics.map((m, i) => (
      <g key={m.label} transform={`translate(0 ${i * 35})`}>
        <rect x={m.hollow - 2} y="36" width="4.500" height="20" fill="none" stroke="#111" strokeWidth="1.300" />
        <rect x={m.solid - 3} y="35.500" width="5.800" height="21" fill="#000" />
      </g>
    ))}
    <g fontSize="11" fontStyle="italic">
      <text x="168" y="214" textLength="28">Worse</text>
      <text x="586" y="214" textAnchor="end">Better</text>
    </g>
    <rect x="167.500" y="224.500" width="5.500" height="14" fill="#000" />
    <text x="176.500" y="236" fontSize="11.500" textLength="181">Percentile relative to all X-ray structures</text>
  </svg>
);

const CloseX = ({ s = 11, w = 2 }: { s?: number; w?: number }) => (
  <svg width={s} height={s} viewBox="0 0 11 11" stroke="#1f1f1f" strokeWidth={w}><path d="M.700.700 10.300 10.300M10.300.700.700 10.300" /></svg>
);

const Windows = () => (
  <svg width="29" height="29" viewBox="0 0 29 29">
    <defs><linearGradient id="win" x2="1" y2="1"><stop stopColor="#8be3ff" /><stop offset=".5" stopColor="#3cc0ff" /><stop offset="1" stopColor="#0a94f5" /></linearGradient></defs>
    <path fill="url(#win)" d="M1 0H14V14H0V1ZM15 0H28L29 1V14H15ZM0 15H14V29H1L0 28ZM15 15H29V28L28 29H15Z" />
  </svg>
);

const Fair = () => (
  <svg width="60" height="32" viewBox="0 0 60 32">
    <path d="M2 24 16 22H58C60 28 52 31 44 31H16C8 31 5 28 2 26Z" fill="#dfe8fb" />
    <path d="M12 5 14 0 16 5V16H12ZM11 8H17V18H11Z" fill="#c9cfe2" />
    <path d="M12 15H30V24H12Z" fill="#d4552c" /><path d="M14 20H30V27H16Z" fill="#f0b57a" />
    <path d="M0 18 8 13 17 18Z" fill="#f0803a" /><path d="M2 18H16V26H3Z" fill="#9a4a26" /><path d="M4 20H6V25H4ZM9 20H11V25H9Z" fill="#ffd76a" />
    <circle cx="43" cy="11" r="6.500" fill="none" stroke="#8b93b5" strokeWidth="1.200" />
    <path d="M36.500 11H49.500M43 4.500V17.500M38.500 6.500 47.500 15.500M47.500 6.500 38.500 15.500" stroke="#8b93b5" strokeWidth=".7" />
    <path d="M36 19H51V25H36Z" fill="#4a5590" /><path d="M38 21H40V24H38ZM43 21H45V24H43ZM47 21H49V24H47Z" fill="#ffd98a" />
    <path d="M51 5 55 2 59 5V24H51Z" fill="#b9782f" /><circle cx="55" cy="9" r="2.500" fill="#fff1c9" /><path d="M51 5 55 1 59 5Z" fill="#2b8078" />
    <path d="M28 3 33 11H31L35 18H33L36 27H20L23 18H21L25 11H23Z" fill="#2c9c52" />
    <path d="M28 0 29 2.500 31.500 3 29.500 4.500 30 7 28 5.500 26 7 26.500 4.500 24.500 3 27 2.500Z" fill="#ffc83d" />
    <g fill="#ffe27a"><circle cx="26" cy="14" r="1" /><circle cx="30" cy="18" r="1" /><circle cx="26" cy="23" r="1" /></g>
  </svg>
);

const Chrome = () => (
  <svg width="31" height="31" viewBox="0 0 48 48">
    <path d="M24 24 4.500 12.500A23 23 0 0 1 44 13Z" fill="#e33b2e" />
    <path d="M24 24 44 13A23 23 0 0 1 24 47Z" fill="#fcc934" />
    <path d="M24 24 24 47A23 23 0 0 1 4.500 12.500Z" fill="#2a9d49" />
    <path d="M24 13H44A23 23 0 0 1 24 47L33.500 29.500Z" fill="#fcc934" />
    <path d="M4.500 12.500 14.500 29.500 24 35 24 47A23 23 0 0 1 4.500 12.500Z" fill="#2a9d49" />
    <circle cx="24" cy="24" r="11" fill="#fff" /><circle cx="24" cy="24" r="8.800" fill="#2b78e4" />
  </svg>
);

const Copilot = () => (
  <svg width="31" height="28" viewBox="0 0 31 28">
    <defs>
      <linearGradient id="cpa" x2="0" y2="1"><stop stopColor="#1fb5f5" /><stop offset=".5" stopColor="#35b67a" /><stop offset="1" stopColor="#f6d323" /></linearGradient>
      <linearGradient id="cpb" x2="0" y2="1"><stop stopColor="#8a63f0" /><stop offset=".5" stopColor="#e04fb0" /><stop offset="1" stopColor="#fb8f4a" /></linearGradient>
    </defs>
    <path d="M9 0H20C23 0 24 2 25 6H20C17 6 16 8 15 12L13 18C12 21 10 21 7 21H4C-1 21 0 17 1 14L4 5C5 2 6 0 9 0Z" fill="url(#cpa)" />
    <path d="M9 0H20C23 0 24 2 25 6H20C17 6 16 4 15 2Z" fill="#1555c4" />
    <path d="M22 28H11C8 28 7 26 6 21H11C14 21 15 19 16 15L18 10C19 7 21 7 24 7H27C32 7 31 11 30 14L27 23C26 26 25 28 22 28Z" fill="url(#cpb)" />
    <path d="M17 7 13.500 20" stroke="#38211f" strokeWidth="2.500" />
  </svg>
);

const Explorer = () => (
  <svg width="30" height="27" viewBox="0 0 30 27">
    <path d="M0 3C0 1 1 0 2 0H9L13 3H27V10H0Z" fill="#e0a21b" />
    <path d="M0 7H10L13 4H28C29 4 30 5 30 6V24C30 25 29 26 28 26H2C1 26 0 25 0 24Z" fill="#ffd04a" />
    <path d="M5 27V21C5 19.500 6 18.500 7.500 18.500H22.500C24 18.500 25 19.500 25 21V27Z" fill="#0f7fd4" /><path d="M9 22H21V23.500H9Z" fill="#064d90" />
  </svg>
);

const Store = () => (
  <svg width="29" height="29" viewBox="0 0 29 29">
    <path d="M8 7V2C8 1.500 8.500 1 9 1H20C20.500 1 21 1.500 21 2V7" fill="none" stroke="#29aee8" strokeWidth="2" />
    <path d="M0 5H29V26C29 28 28 29 26 29H3C1 29 0 28 0 26Z" fill="#f1f1f1" />
    <path d="M9 11H14V16H9Z" fill="#f1511b" /><path d="M15 11H20V16H15Z" fill="#80b800" /><path d="M9 17H14V22H9Z" fill="#20a3ea" /><path d="M15 17H20V22H15Z" fill="#fbb900" />
  </svg>
);

const MyAsus = () => (
  <svg width="30" height="30" viewBox="0 0 30 30">
    <defs><linearGradient id="asus" x1="0" y1="1" x2="1" y2="0"><stop stopColor="#5a1ff0" /><stop offset=".5" stopColor="#2464f8" /><stop offset="1" stopColor="#0a9bff" /></linearGradient></defs>
    <path fill="url(#asus)" d="M0 0H30V30H0Z" />
    <path d="M8.500 8H12L7 21H3.500Z" fill="#c5d6ff" />
    <path d="M16 8H19L13 21H9.500ZM20 8H22.500L25 21H21.800L21.400 18H16L17.500 15.500H21L20.500 12 16.500 21H14Z" fill="#fff" />
  </svg>
);

const M365 = () => (
  <svg width="27" height="29" viewBox="0 0 27 29">
    <defs>
      <linearGradient id="m1" x2="0" y2="1"><stop stopColor="#7cc6f5" /><stop offset="1" stopColor="#5a6de8" /></linearGradient>
      <linearGradient id="m2" x2="1"><stop stopColor="#8a5be0" /><stop offset="1" stopColor="#c9a0f5" /></linearGradient>
    </defs>
    <path d="M12 0 2 6C1 7 0 8 0 9V20C0 22 2 23 4 22L9 19V10L18 4Z" fill="url(#m1)" />
    <path d="M12 0 25 7C26 8 27 9 27 10V17L18 11V4Z" fill="#3d62c4" /><path d="M18 10 27 10V20L18 22Z" fill="#77a4ef" />
    <path d="M2 23 9 19 18 20 27 17C27 20 26 21 25 22L15 28C14 29 12 29 11 28Z" fill="url(#m2)" />
  </svg>
);

const Edge = () => (
  <svg width="31" height="31" viewBox="0 0 31 31">
    <defs>
      <linearGradient id="e1" x2="1"><stop stopColor="#25a5e8" /><stop offset=".6" stopColor="#2fc2c0" /><stop offset="1" stopColor="#6ae04c" /></linearGradient>
      <linearGradient id="e2" x2="0" y2="1"><stop stopColor="#1b8fd8" /><stop offset="1" stopColor="#0d4aa0" /></linearGradient>
    </defs>
    <circle cx="15.500" cy="15.500" r="15.500" fill="url(#e2)" />
    <path d="M0 14C1 6 8 0 16 0C25 0 31 7 31 13C31 18 27 21 23 21C19 21 17 19 18 17C20 13 16 10 11 10C6 10 2 12 0 14Z" fill="url(#e1)" />
    <path d="M18 17C17 21 20 24 24 24C27 24 29 23 30 23C28 25 25 27 21 26C15 25 12 20 14 15C15 13 18 14 18 17Z" fill="#36201f" />
    <path d="M14 13C10 18 12 26 19 30C10 32 5 24 7 18C8 15 11 13 14 13Z" fill="#1468bd" />
  </svg>
);

const Excel = () => (
  <svg width="30" height="28" viewBox="0 0 30 28">
    <path d="M7 1H18V14H7Z" fill="#21a366" /><path d="M18 0H28L30 2V8H18Z" fill="#33c481" /><path d="M7 0H18V8H7Z" fill="#21a366" /><path d="M7 8H18V20H7Z" fill="#107c41" /><path d="M18 8H30V14H18Z" fill="#21a366" /><path d="M18 14H30V20H18Z" fill="#107c41" /><path d="M7 20H30V27H7Z" fill="#185c37" />
    <rect y="6" width="15" height="15" rx="1" fill="#107c41" /><path d="M4.500 9.500 10.500 17.500M10.500 9.500 4.500 17.500" stroke="#fff" strokeWidth="2" />
  </svg>
);

const VsCode = () => (
  <svg width="31" height="31" viewBox="0 0 31 31">
    <path d="M23 0 31 3V28L23 31 9 17 3 22 0 20V19L23 0Z" fill="#0b7ac4" />
    <path d="M0 12 3 9 9 14 23 31 22 22Z" fill="#118ad6" /><path d="M0 12 3 9 22 22V24Z" fill="#118ad6" />
    <path d="M23 0 31 3V28L23 31Z" fill="#27a3f2" /><path d="M23 8.500V22L14 15.500Z" fill="#421513" />
  </svg>
);

const bookmarks: { icon: React.ReactNode; text: string; w: number; ls: number }[] = [
  { icon: <BlueTile>PBT</BlueTile>, text: 'PBT Fencing – Profe...', w: 193, ls: -0.39 },
  { icon: <svg width="20" height="20"><path fill="#3f51b5" d="M0 0H20V20H0Z" /><path fill="#fff" d="M4 5H16V8H4ZM4 10H9V15H4ZM11 10H16V15H11Z" /></svg>, text: 'Khanh Nguyen - gt...', w: 193, ls: -0.16 },
  { icon: <FcGoogle size={18} />, text: 'Google Java Style G...', w: 191.5, ls: -0.16 },
  { icon: <svg width="20" height="20"><path fill="#24509a" d="M2 1 19 0 18 9 20 15 16 20 3 19 0 10Z" /><path d="M12 2 16 4 11 16 7 19 7 13Z" fill="#111" stroke="#fff" strokeWidth=".8" /><path d="M12 6 14.500 7 10.500 15 8.800 14Z" fill="#e8782a" /><path d="M12.500 3.500 15 4.500 14.500 6 12 5Z" fill="#f4a9b8" /></svg>, text: 'skribbl - Free Multip...', w: 192.5, ls: -0.3 },
  { icon: <FaGithub size={20} color="#24292f" />, text: 'tiepvupsu.github.io/...', w: 193, ls: -0.35 },
  { icon: <svg width="20" height="20" fill="none" stroke="#7412d4" strokeWidth="2.400"><path d="M1.200 2H18.800V14H1.200ZM6 14 4 19M14 14 16 19M10 14V18" /><path d="M4 6H6M8 6H10M4 9.500H6" strokeWidth="2" /></svg>, text: 'Machine Learning R...', w: 192, ls: -0.34 },
  { icon: <svg width="20" height="20" fill="none" stroke="#3b6fc0"><circle cx="6" cy="9" r="4" strokeWidth="3" /><circle cx="13" cy="13" r="2" strokeWidth="2" /><circle cx="17" cy="7" r="1.500" stroke="#7fb4e6" /></svg>, text: 'Sơ lược về kiến trúc...', w: 193, ls: -0.35 },
  { icon: <svg width="19" height="20" fill="none" strokeWidth="2.400"><defs><linearGradient id="hx" x2=".6" y2="1"><stop stopColor="#10c0f8" /><stop offset=".5" stopColor="#b070f0" /><stop offset="1" stopColor="#ff5030" /></linearGradient></defs><path stroke="url(#hx)" d="M9.500 1.500 17.500 6V14L9.500 18.500 1.500 14V6ZM4 7 9.500 10.500 15 7M9.500 10.500V18" /></svg>, text: 'Dữ liệu có cấu trúc l...', w: 239, ls: -0.35 },
];

const navItems: [string, boolean][] = [
  ['Deposit', true], ['Search', true], ['Visualize', true], ['Analyze', true], ['Download', true],
  ['Learn', true], ['About', true], ['Careers', false], ['COVID-19', false],
];
const tabs = ['Structure Summary', 'Structure', 'Annotations', 'Experiment', 'Sequence', 'Genome', 'Ligands', 'Versions'];
const authors = ['Stihle, M.', 'Hunziker, D.', 'Benz, J.', 'Mattei, P.', 'Rudolph, M.G.'];

const BrowserChrome = () => (
  <>
    <TabStrip>
      <TabMenu><ChevronDown size={16} strokeWidth={3} /></TabMenu>
      <Tab $active $w={290}>
        <Favicon>PDB</Favicon><TabTitle $ls={-0.45}>RCSB PDB - 5S9L: AUTOTAXIN, 4-[3-Oxo</TabTitle><CloseX />
      </Tab>
      <Tab $w={290}>
        <Favicon>PDB</Favicon><TabTitle $ls={-0.33}>rcsb.org/fasta/entry/5S9L/display</TabTitle><CloseX />
      </Tab>
      <StripDivider />
      <PlusBox><svg width="14" height="14" stroke="#1f1f1f" strokeWidth="2"><path d="M7 0V14M0 7H14" /></svg></PlusBox>
      <WindowButtons>
        <svg width="13" height="13" stroke="#111"><path d="M0 6.500H13" /></svg>
        <svg width="13" height="13" fill="none" stroke="#111" strokeWidth="1.200"><rect x=".6" y="3" width="9.500" height="9.500" rx="2" /><path d="M3 1H10C12 1 12.400 2 12.400 3V10" /></svg>
        <CloseX s={14} w={0.9} />
      </WindowButtons>
    </TabStrip>
    <Toolbar>
      <ToolbarFace>
        <NavIcons>
          <svg width="18" height="18" fill="none" stroke="#1f1f1f" strokeWidth="2"><path d="M16 9H2.500M9 2 2 9 9 16" /></svg>
          <svg width="18" height="18" fill="none" stroke="#a5a5a5" strokeWidth="2"><path d="M1 9H14.500M8 2 15 9 8 16" /></svg>
          <svg width="18" height="18" fill="none" stroke="#1f1f1f" strokeWidth="2"><path d="M15.300 11A6.800 6.800 0 1 1 14 4.500L16 6.500M16.200 1V7H10.200" /></svg>
        </NavIcons>
        <AddressBar>
          <SiteInfo>
            <svg width="16" height="16" fill="none" stroke="#1f1f1f" strokeWidth="2"><circle cx="3.500" cy="4" r="2" /><path d="M8.500 4H15M1 12H7.500" /><circle cx="12.500" cy="12" r="2" /></svg>
          </SiteInfo>
          <b>rcsb.org</b>/structure/5S9L#entity-1
          <Grow />
          <Star size={20} color="#5b5b5b" strokeWidth={2} />
        </AddressBar>
        <Extensions>
          <svg width="18" height="21"><path d="M9 .5C12 2.500 14 3 17 3C17.500 11 15 17 9 20.500C3 17 .5 11 1 3C4 3 6 2.500 9 .5Z" fill="#b9c2d2" stroke="#98a3b8" /><circle cx="9" cy="9.500" r="5" fill="#dde3ec" stroke="#8c9ab3" /><circle cx="9" cy="9.500" r="2" fill="#9aa7bd" /></svg>
          <svg width="21" height="21"><rect width="21" height="21" rx="4" fill="#000" /><path fill="#fff" d="M4 4H8V8H4ZM13 4H17V8H13ZM8.500 8.500H12.500V12.500H8.500ZM4 13H8V17H4ZM13 13H17V17H13Z" /></svg>
          <svg width="21" height="21" fill="none" stroke="#1f1f1f" strokeWidth="2.200"><path d="M2 4H17V19H2V14C5 13.500 5 9.500 2 9Z" strokeLinejoin="round" /><path d="M7 4A2.500 2.500 0 0 1 12 4ZM17 9A2.500 2.500 0 0 1 17 14Z" fill="#1f1f1f" strokeWidth="1" /></svg>
        </Extensions>
        <ToolbarRight>
          <VRule />
          <svg width="21" height="20" fill="none" stroke="#1f1f1f" strokeWidth="2.400"><path d="M10.500 0V12M5 7.500 10.500 13 16 7.500M1.200 14V18.800H19.800V14" /></svg>
          <Avatar>N</Avatar>
          <svg width="18" height="20" fill="#1f1f1f"><circle cx="12" cy="3" r="2.100" /><circle cx="12" cy="10" r="2.100" /><circle cx="12" cy="17" r="2.100" /></svg>
        </ToolbarRight>
      </ToolbarFace>
    </Toolbar>
    <Bookmarks>
      <svg width="18" height="18" fill="none" stroke="#333" strokeWidth="2"><path d="M1 1H7V7H1ZM11 1H17V7H11ZM1 11H7V17H1ZM11 11H17V17H11Z" /></svg>
      <VRule $m="0 17.500px 0 19.500px" />
      <Bookmark $w={39} $ls={0}><FaFacebook size={20} color="#0866ff" /></Bookmark>
      {bookmarks.map(b => <Bookmark key={b.text} $w={b.w} $ls={b.ls}>{b.icon}{b.text}</Bookmark>)}
      <svg width="13" height="12" fill="none" stroke="#1f1f1f" strokeWidth="2"><path d="M1 1 6 6 1 11M7 1 12 6 7 11" /></svg>
      <Grow />
      <VRule $m="0 20px 0 0" />
      <Folder size={21} strokeWidth={1.8} color="#5b5b5b" />
      <Bookmark $w={117} $ls={-0.35}><IconSlot />Tất cả dấu trang</Bookmark>
    </Bookmarks>
  </>
);

const Info = () => <IconSlot $m="0 0 0 1px"><FaInfoCircle size={17.500} /></IconSlot>;

const LeftPanel = () => (
  <Panel>
    <PanelHead>
      <Chevron />
      <PanelTitle>Biological Assembly 1 <FaQuestionCircle size={19} /></PanelTitle>
      <Chevron flip />
    </PanelHead>
    <Viewer>
      <ExpandButton>
        <svg width="16" height="16" fill="#222"><path d="M9 1H15V7L13 5 10.500 7.500 8.500 5.500 11 3ZM1 9V15H7L5 13 7.500 10.500 5.500 8.500 3 11Z" /></svg>
      </ExpandButton>
      <Protein />
    </Viewer>
    <PanelFoot>
      <Line><IconSlot $m="0 4.500px 0 0"><CubeIcon /></IconSlot><b>Explore in 3D</b>: <A>Structure</A> | <A>Sequence Annotations</A> |</Line>
      <Line><A>Electron Density</A> | <A>Validation Report</A> | <A>Ligand Interaction</A> (6ZO)</Line>
      <Rule />
      <Line><b>Global Symmetry</b>: Asymmetric - C1 <Info /></Line>
      <Line><b>Global Stoichiometry</b>: Monomer - A1 <Info /></Line>
    </PanelFoot>
  </Panel>
);

const Details = () => (
  <div>
    <Actions>
      <Action $w={143} $first>
        <svg width="14" height="16" fill="#fff"><path d="M0 0H8V6H14V16H0ZM9.500 0 14 4.500H9.500Z" /></svg>
        Display Files<Caret />
      </Action>
      <Action $w={162}>
        <svg width="16" height="16" fill="none" stroke="#fff" strokeWidth="2"><circle cx="8" cy="8" r="6.800" /><path d="M6.800 4H9.200V8H11.500L8 12 4.500 8H6.800Z" fill="#fff" stroke="none" /></svg>
        Download Files<Caret />
      </Action>
      <Action $w={110} $light><FaCog size={15} />Data API</Action>
    </Actions>
    <Heading>
      <FlaskTile>
        <svg width="21" height="21" fill="none" stroke="#fff" strokeWidth="2"><path d="M6.500 1.500H14.500" /><path d="M8.500 2V8L2.500 19H18.500L12.500 8V2" /><path d="M6 13.500H15L18 19H3Z" fill="#fff" /></svg>
      </FlaskTile>
      5S9L
    </Heading>
    <Title>AUTOTAXIN, 4-[3-Oxo-3-(2-oxo-2,3-dihydro-benzooxazol-6-yl)-propyl]-piperazine-1-carboxylic acid 3,5-dichloro-benzyl ester, 1.90A, P212121, Rfree=19.1%</Title>
    <Block $h={37.5}>
      <Line>
        <b>PDB DOI:</b> <A>https://doi.org/10.2210/pdb5S9L/pdb</A>{'  '}<IconSlot $m="0 3px 0 0" /><b>Deposition Group:</b> <A $b $u>G_1002194</A> Explore
        <GroupButton>
          G_1002194
          <svg width="14" height="14" fill="none" stroke={link} strokeWidth="1.400"><path d="M3.500 4V1.800C3.500 1.200 4 .8 4.500.8H12.200C12.800.8 13.200 1.200 13.200 1.800V9C13.200 9.600 12.800 10 12.200 10H10.500" /><rect x=".8" y="4" width="9.700" height="9.200" rx="1" /></svg>
        </GroupButton>
      </Line>
    </Block>
    <Block $h={125}>
      <Line><b>Classification:</b> <A $b>HYDROLASE</A></Line>
      <Line><b>Organism(s):</b> <A>Rattus norvegicus</A></Line>
      <Line><b>Expression System:</b> <A>Homo sapiens</A></Line>
      <Line><b>Mutation(s):</b> Yes <Info /></Line>
    </Block>
    <Block $h={75}>
      <Line><b>Deposited:</b> 2021-03-31 <b>Released:</b> 2022-04-13</Line>
      <Line><b>Deposition Author(s):</b> {authors.map((a, i) => <React.Fragment key={a}>{i > 0 && ', '}<A>{a}</A></React.Fragment>)}</Line>
      <Line><b>Funding Organization(s):</b> F. Hoffmann-La Roche</Line>
    </Block>
    <Rule />
    <Split>
      <div>
        <Block $h={37.5}><b>Experimental Data Snapshot</b></Block>
        <Block $h={137.9}>
          <Line><b>Method:</b> X-RAY DIFFRACTION</Line>
          <Line><b>Resolution:</b> 1.90 Å</Line>
          <Line><b>R-Value Free:</b> 0.191</Line>
          <Line><b>R-Value Work:</b> 0.158</Line>
          <Line><b>R-Value Observed:</b> 0.160</Line>
        </Block>
        <Line><b>Starting Model:</b> other</Line>
        <Line><A>View more details</A></Line>
      </div>
      <div>
        <ValidationHead>
          <ValidationTitle>wwPDB Validation</ValidationTitle>
          <IconSlot $m="2px 0 0 10px"><FaInfoCircle size={17.500} /></IconSlot>
          <Grow />
          <SmallButton><CubeIcon s={15} />3D Report</SmallButton>
          <SmallButton>Full Report</SmallButton>
        </ValidationHead>
        <ChartBox><ValidationChart /></ChartBox>
      </div>
    </Split>
  </div>
);

const WindowsTaskbar = () => (
  <Taskbar>
    <Stock>
      <svg width="33" height="40" viewBox="0 0 33 40">
        <path d="M0 19 4 14 9 20 14 15 24 23V18L29 23V30H15L14 21 8 27Z" fill="#a92d12" />
        <path d="M14 25 16 22H29V30H14Z" fill="#d9480f" />
        <circle cx="23.500" cy="8.500" r="10" fill="#fb919d" />
        <text x="23.500" y="13.500" textAnchor="middle" fontSize="13.500" fill="#2b1b26">1</text>
      </svg>
      <StockText>CTG<span>-1,52%</span></StockText>
    </Stock>
    <Windows />
    <SearchPill>
      <Search size={20} strokeWidth={2.400} color="#e4dce4" />
      <IconSlot $m="0 0 0 11px" />Tìm kiếm
      <Grow />
      <Fair />
    </SearchPill>
    <Cell>
      <svg width="30" height="28"><path d="M0 8H22V28H0Z" fill="#5b5653" /><path d="M7 0H30V20H7Z" fill="#f3f3f3" /><path d="M7 8H22V20H7Z" fill="#b4b1b0" /></svg>
    </Cell>
    <Cell $active><Chrome /><CellBadge>N</CellBadge><RunMark $on /></Cell>
    <Cell><Copilot /></Cell>
    <Cell><Explorer /></Cell>
    <Cell><Store /></Cell>
    <Cell><MyAsus /></Cell>
    <Cell><M365 /></Cell>
    <Cell><Edge /></Cell>
    <Cell><Excel /><RunMark /></Cell>
    <Cell><VsCode /><RunMark /></Cell>
    <Tray>
      <ChevronUp size={20} strokeWidth={2.200} />
      <Lang>ENG</Lang>
      <Wifi size={21} strokeWidth={1.800} />
      <IconSlot $m="0 9px"><Volume2 size={21} strokeWidth={1.600} /></IconSlot>
      <svg width="22" height="18" fill="none" stroke="#fff" strokeWidth="1.500"><rect x="2" y="4" width="16" height="12" rx="3" /><path d="M6 7H16V13.500H4.500V11Z" fill="#fff" /><path d="M19.500 8V12" strokeWidth="2.400" /><path d="M4 0 1 6H4L3 10 8 4H5L6 0Z" fill="#fff" stroke="#2f1b1f" strokeWidth=".6" /></svg>
      <Clock>11:36 SA<br />19/12/2024</Clock>
      <Bell size={19} strokeWidth={1.700} />
    </Tray>
  </Taskbar>
);

export default function App() {
  return (
    <Screen>
      <Global />
      <BrowserChrome />
      <Middle>
        <Page>
          <SiteNav>
            <Brand>RCSB PDB</Brand>
            {navItems.map(([t, caret]) => <NavItem key={t}>{t}{caret && <Caret />}</NavItem>)}
            <Grow />
            <OutlineButton $w={58}>Help</OutlineButton>
            <OutlineButton $w={99}>Contact us</OutlineButton>
            <OutlineButton $w={93}>MyPDB<Caret /></OutlineButton>
          </SiteNav>
          <PageTabs>
            {tabs.map((t, i) => <PageTab key={t} $active={i === 0}>{t}</PageTab>)}
          </PageTabs>
          <Columns>
            <LeftPanel />
            <Details />
          </Columns>
        </Page>
        <VScroll><Arrow $d="u" /><VThumb /><Arrow $d="d" /></VScroll>
      </Middle>
      <HScroll><Arrow $d="l" /><HThumb /><Arrow $d="r" /></HScroll>
      <WindowsTaskbar />
    </Screen>
  );
}
